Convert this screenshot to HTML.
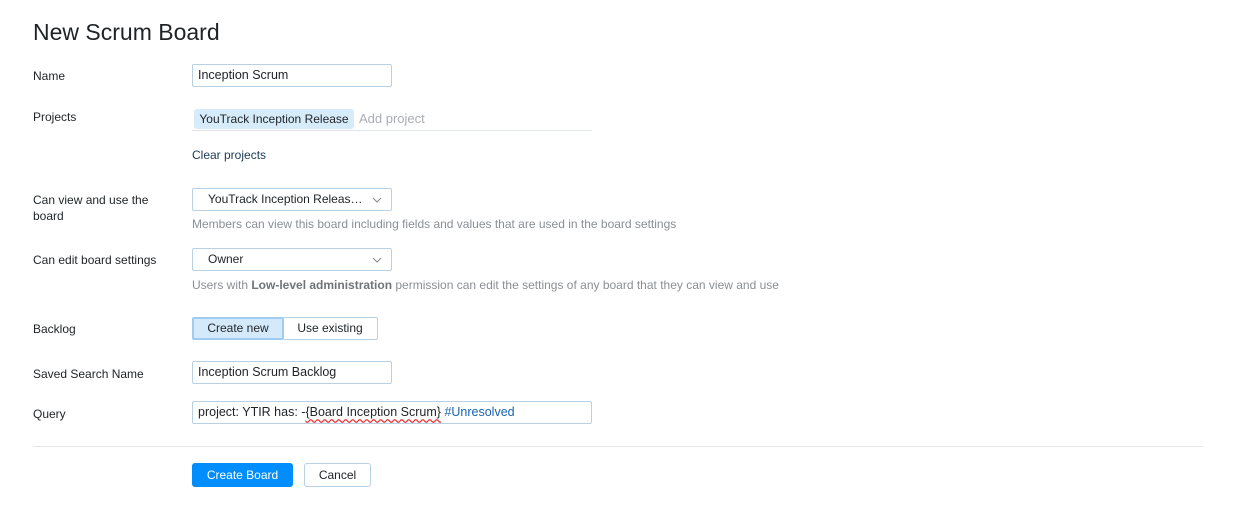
<!DOCTYPE html>
<html><head><style>
body{margin:0;width:1234px;height:522px;background:#fff;font-family:"Liberation Sans",sans-serif;font-size:12px;color:#1f2326;position:relative;overflow:hidden}
.a{position:absolute;white-space:nowrap}
.inp{position:absolute;box-sizing:border-box;border:1px solid #b8d1e5;border-radius:2px;height:23px;line-height:21px;padding-left:5px;font-size:12.5px;white-space:nowrap}
.help{color:#8a8f94;font-size:12px}
.chev{position:absolute;right:9px;top:7px;width:10px;height:8px}
.lbl{position:absolute;white-space:nowrap;margin-top:1px}
</style></head><body>
<div class="a" style="left:33px;top:19px;font-size:23px;color:#1f2326">New Scrum Board</div>

<div class="lbl" style="left:33px;top:68px">Name</div>
<div class="inp" style="left:192px;top:64px;width:200px">Inception Scrum</div>

<div class="lbl" style="left:33px;top:109px">Projects</div>
<div class="a" style="left:194px;top:109px;width:160px;height:20px;background:#d6ecfa;border-radius:3px;line-height:20px;text-align:center;font-size:12px">YouTrack Inception Release</div>
<div class="a" style="left:359px;top:111px;color:#a9adb1;font-size:13px">Add project</div>
<div class="a" style="left:192px;top:130px;width:400px;height:1px;background:#dfe5eb"></div>
<div class="a" style="left:192px;top:148px;color:#1a3a57">Clear projects</div>

<div class="lbl" style="left:33px;top:191px;line-height:16px">Can view and use the<br>board</div>
<div class="inp" style="left:192px;top:188px;width:200px;padding-left:15px;font-size:12px"><span style="display:inline-block;width:160px;overflow:hidden;text-overflow:ellipsis;vertical-align:top">YouTrack Inception Release Team</span><svg class="chev" viewBox="0 0 10 8"><path d="M1 2l4 4 4-4" fill="none" stroke="#888" stroke-width="1"/></svg></div>
<div class="a help" style="left:192px;top:217px">Members can view this board including fields and values that are used in the board settings</div>

<div class="lbl" style="left:33px;top:252px">Can edit board settings</div>
<div class="inp" style="left:192px;top:248px;width:200px;padding-left:15px;font-size:12px">Owner<svg class="chev" viewBox="0 0 10 8"><path d="M1 2l4 4 4-4" fill="none" stroke="#888" stroke-width="1"/></svg></div>
<div class="a help" style="left:192px;top:278px">Users with <b style="color:#6f7479">Low-level administration</b> permission can edit the settings of any board that they can view and use</div>

<div class="lbl" style="left:33px;top:321px">Backlog</div>
<div class="inp" style="left:192px;top:317px;width:92px;padding:0;text-align:center;background:#d4eafb;border:2px solid #9fcdf2;line-height:19px;font-size:12px">Create new</div>
<div class="inp" style="left:283px;top:317px;width:95px;padding:0;text-align:center;border-left:none;font-size:12px">Use existing</div>

<div class="lbl" style="left:33px;top:366px">Saved Search Name</div>
<div class="inp" style="left:192px;top:361px;width:200px">Inception Scrum Backlog</div>

<div class="lbl" style="left:33px;top:406px">Query</div>
<div class="inp" style="left:192px;top:401px;width:400px">project: YTIR has: -<span style="text-decoration:underline wavy #e33;text-underline-offset:2px">{Board Inception Scrum}</span> <span style="color:#1864b0">#Unresolved</span></div>

<div class="a" style="left:33px;top:446px;width:1170px;height:1px;background:#e3e6ea"></div>

<div class="a" style="left:192px;top:463px;width:101px;height:24px;background:#008eff;border-radius:3px;color:#fff;text-align:center;line-height:24px">Create Board</div>
<div class="a" style="left:304px;top:463px;width:67px;height:24px;box-sizing:border-box;border:1px solid #b8d1e5;border-radius:3px;text-align:center;line-height:22px">Cancel</div>
</body></html>
